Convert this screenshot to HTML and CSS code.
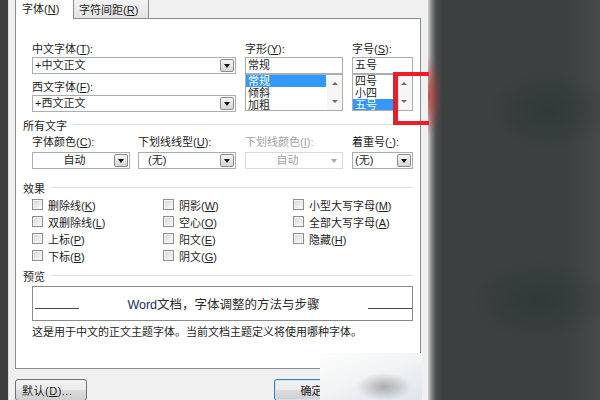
FILE: index.html
```html
<!DOCTYPE html>
<html lang="zh-CN">
<head>
    <meta charset="UTF-8">
    <meta name="viewport" content="width=device-width, initial-scale=1.0">
    <title>字体</title>
    <link rel="stylesheet" href="styles.css">
</head>
<body>
    <div class="screen">
        <div class="edge-left"></div>
        <div class="dialog">
            <div class="tabs">
                <div class="tab active">字体(<u>N</u>)</div>
                <div class="tab">字符间距(<u>R</u>)</div>
            </div>
            <div class="panel">
                <div class="font-grid">
                    <div class="field">
                        <div class="field-label">中文字体(<u>T</u>):</div>
                        <div class="combo"><span class="combo-text">+中文正文</span><span class="drop"></span></div>
                        <div class="field-label spaced">西文字体(<u>F</u>):</div>
                        <div class="combo"><span class="combo-text">+西文正文</span><span class="drop"></span></div>
                    </div>
                    <div class="field">
                        <div class="field-label">字形(<u>Y</u>):</div>
                        <div class="textbox">常规</div>
                        <div class="listbox">
                            <div class="items">
                                <div class="item selected">常规</div>
                                <div class="item">倾斜</div>
                                <div class="item">加粗</div>
                            </div>
                            <div class="scrollbar"><span class="arrow up"></span><span class="arrow down"></span></div>
                        </div>
                    </div>
                    <div class="field">
                        <div class="field-label">字号(<u>S</u>):</div>
                        <div class="textbox">五号</div>
                        <div class="listbox">
                            <div class="items">
                                <div class="item">四号</div>
                                <div class="item">小四</div>
                                <div class="item selected">五号</div>
                            </div>
                            <div class="scrollbar wide"><span class="arrow up"></span><span class="arrow down"></span></div>
                        </div>
                    </div>
                </div>

                <div class="group-title">所有文字</div>
                <div class="color-row">
                    <div class="field">
                        <div class="field-label">字体颜色(<u>C</u>):</div>
                        <div class="combo small"><span class="combo-text center">自动</span><span class="drop"></span></div>
                    </div>
                    <div class="field">
                        <div class="field-label">下划线线型(<u>U</u>):</div>
                        <div class="combo small"><span class="combo-text indent">(无)</span><span class="drop"></span></div>
                    </div>
                    <div class="field disabled">
                        <div class="field-label">下划线颜色(<u>I</u>):</div>
                        <div class="combo small"><span class="combo-text center">自动</span><span class="drop"></span></div>
                    </div>
                    <div class="field">
                        <div class="field-label">着重号(<u>·</u>):</div>
                        <div class="combo tiny"><span class="combo-text">(无)</span><span class="drop"></span></div>
                    </div>
                </div>

                <div class="group-title">效果</div>
                <div class="effects">
                    <label class="check"><span class="box"></span><span>删除线(<u>K</u>)</span></label>
                    <label class="check"><span class="box"></span><span>双删除线(<u>L</u>)</span></label>
                    <label class="check"><span class="box"></span><span>上标(<u>P</u>)</span></label>
                    <label class="check"><span class="box"></span><span>下标(<u>B</u>)</span></label>
                    <label class="check"><span class="box"></span><span>阴影(<u>W</u>)</span></label>
                    <label class="check"><span class="box"></span><span>空心(<u>O</u>)</span></label>
                    <label class="check"><span class="box"></span><span>阳文(<u>E</u>)</span></label>
                    <label class="check"><span class="box"></span><span>阴文(<u>G</u>)</span></label>
                    <label class="check"><span class="box"></span><span>小型大写字母(<u>M</u>)</span></label>
                    <label class="check"><span class="box"></span><span>全部大写字母(<u>A</u>)</span></label>
                    <label class="check"><span class="box"></span><span>隐藏(<u>H</u>)</span></label>
                </div>

                <div class="group-title">预览</div>
                <div class="preview">
                    <span class="baseline"></span>
                    <span class="preview-text"><span class="latin">Word</span>文档，字体调整的方法与步骤</span>
                    <span class="baseline"></span>
                </div>
                <p class="hint">这是用于中文的正文主题字体。当前文档主题定义将使用哪种字体。</p>
            </div>
            <div class="buttons">
                <button type="button" class="btn default">默认(<u>D</u>)...</button>
                <button type="button" class="btn ok">确定</button>
                <button type="button" class="btn">取消</button>
            </div>
        </div>
        <div class="backdrop"></div>
    </div>

    <div class="annotation"></div>
    <div class="watermark"></div>
</body>
</html>
```

FILE: styles.css
```css
* {
    box-sizing: border-box;
}
body {
    margin: 0;
    width: 600px;
    height: 400px;
    overflow: hidden;
    position: relative;
    font-family: "Liberation Sans", "Noto Sans CJK SC", sans-serif;
    font-size: 11px;
    color: #1e1e1e;
    background-color: #3b4141;
}
u {
    text-decoration: underline;
    text-underline-offset: 1px;
}
.screen {
    display: flex;
    height: 400px;
}
.edge-left {
    width: 8px;
    background-color: #3d3d3d;
}
.dialog {
    width: 420px;
    padding: 0 7px;
    background-color: #f0f0f0;
    box-shadow: inset 1px 0 #dadada;
}

/* tabs */
.tabs {
    display: flex;
    height: 18px;
}
.tab {
    width: 76px;
    height: 18px;
    line-height: 20px;
    padding-left: 5px;
    border-left: 1px solid #898c95;
    border-right: 1px solid #898c95;
    background: linear-gradient(#f2f2f2, #e3e3e3);
}
.tab.active {
    width: 58px;
    height: 19px;
    line-height: 18px;
    padding-left: 6px;
    margin-bottom: -1px;
    border-right: none;
    background: #fff;
    position: relative;
    z-index: 1;
}

/* panel */
.panel {
    height: 351px;
    padding: 23px 7px 0;
    border: 1px solid #898c95;
    background-color: #fff;
}
.field-label {
    height: 15px;
    line-height: 15px;
    white-space: nowrap;
}
.field-label.spaced {
    margin-top: 6px;
}
.font-grid {
    display: grid;
    grid-template-columns: 204px 98px 61px;
    column-gap: 9px;
    margin-left: 9px;
}
.combo {
    display: flex;
    align-items: center;
    height: 17px;
    border: 1px solid #a9adb4;
    background-color: #fff;
}
.combo-text {
    flex: 1;
    padding-left: 2px;
    line-height: 15px;
    white-space: nowrap;
}
.combo-text.center {
    text-align: center;
}
.combo-text.indent {
    padding-left: 9px;
}
.combo.small {
    width: 98px;
    margin-top: 2px;
}
.combo.tiny {
    width: 61px;
    margin-top: 2px;
}
.drop {
    display: flex;
    align-items: center;
    justify-content: center;
    width: 14px;
    height: 13px;
    margin-right: 1px;
    border: 1px solid #8b8b8b;
    border-radius: 2px;
    background: linear-gradient(#f6f6f6, #d6d6d6);
}
.drop::after {
    content: "";
    border-left: 3px solid transparent;
    border-right: 3px solid transparent;
    border-top: 4px solid #111;
}
.textbox {
    height: 17px;
    line-height: 15px;
    padding-left: 2px;
    border: 1px solid #a9adb4;
}
.listbox {
    display: flex;
    height: 37px;
    border: 1px solid #a9adb4;
    overflow: hidden;
}
.items {
    flex: 1;
    overflow: hidden;
}
.item {
    height: 12px;
    line-height: 12px;
    padding-left: 2px;
    white-space: nowrap;
}
.item.selected {
    background-color: #3399ff;
    color: #fff;
}
.scrollbar {
    display: flex;
    flex-direction: column;
    width: 15px;
    margin-left: 1px;
    background-color: #f6f6f6;
}
.scrollbar.wide {
    width: 17px;
}
.arrow {
    flex: 1;
    display: flex;
    align-items: center;
    justify-content: center;
}
.arrow::after {
    content: "";
    border-left: 3px solid transparent;
    border-right: 3px solid transparent;
}
.arrow.up::after {
    border-bottom: 3px solid #6a6a6a;
}
.arrow.down::after {
    border-top: 3px solid #6a6a6a;
}

/* group titles */
.group-title {
    display: flex;
    align-items: center;
    height: 15px;
    margin-top: 5px;
    white-space: nowrap;
}
.group-title::after {
    content: "";
    flex: 1;
    height: 1px;
    margin-left: 6px;
    background-color: #d8e1e8;
}
.color-row {
    display: grid;
    grid-template-columns: 106px 107px 107px 61px;
    margin: 3px 0 11px 9px;
}
.disabled {
    color: #a2a2a2;
}
.disabled .combo {
    border-color: #d9d9d9;
}
.disabled .drop {
    border-color: transparent;
    background: none;
}
.disabled .drop::after {
    border-top-color: #a8a8a8;
}
.color-row + .group-title {
    margin-top: 0;
}

/* effects */
.effects {
    display: grid;
    grid-template-columns: 131px 130px auto;
    grid-template-rows: repeat(4, 17px);
    grid-auto-flow: column;
    margin: 1px 0 0 9px;
}
.check {
    display: flex;
    align-items: center;
    gap: 5px;
    white-space: nowrap;
}
.box {
    width: 11px;
    height: 11px;
    border: 1px solid #8e8f8f;
    box-shadow: inset 0 0 0 1px #f4f4f4;
    background: linear-gradient(135deg, #d6d6d6, #fafafa);
}
.effects + .group-title {
    margin-top: 4px;
}

/* preview */
.preview {
    display: flex;
    align-items: center;
    justify-content: space-between;
    height: 35px;
    margin: 3px 0 0 9px;
    padding-left: 2px;
    border: 1px solid #8a8a8a;
}
.baseline {
    width: 44px;
    height: 1px;
    margin-top: 9px;
    background-color: #4a4a4a;
}
.preview-text {
    font-size: 12.5px;
    color: #2a2a2a;
}
.preview-text .latin {
    color: #1c2f5c;
}
.hint {
    height: 15px;
    line-height: 15px;
    margin: 4px 0 0 9px;
    white-space: nowrap;
}

/* buttons */
.buttons {
    display: flex;
    gap: 6px;
    margin-top: 10px;
}
.btn {
    height: 22px;
    width: 66px;
    padding: 0;
    font-family: inherit;
    font-size: 11px;
    color: #1e1e1e;
    border: 1px solid #707070;
    border-radius: 3px;
    background: linear-gradient(#f2f2f2 0%, #ebebeb 50%, #dddddd 51%, #cfcfcf 100%);
}
.btn.default {
    width: 72px;
    text-align: left;
    padding-left: 6px;
    letter-spacing: 0.5px;
}
.btn.ok {
    width: 75px;
    margin-left: auto;
    border-color: #3c7fb1;
    box-shadow: inset 0 0 0 1px #c7e6f8;
}

/* dark surroundings */
.backdrop {
    flex: 1;
    background:
        radial-gradient(14px 42px at 0 96px, rgba(200, 40, 45, 0.75), rgba(200, 40, 45, 0)),
        linear-gradient(to right, #cfcfcf 0, #7d8282 4px, #4a5050 8px, rgba(59, 65, 65, 0) 14px),
        radial-gradient(60px 40px at 120px 110px, #313838, rgba(49, 56, 56, 0)),
        radial-gradient(70px 40px at 110px 300px, #313838, rgba(49, 56, 56, 0)),
        linear-gradient(to right, #3b4141 80%, #464949);
}

/* overlays */
.annotation {
    position: absolute;
    left: 393px;
    top: 72px;
    width: 36px;
    height: 53px;
    border: 4px solid #ee1c25;
    border-left-width: 5px;
    border-right: none;
}
.watermark {
    position: absolute;
    left: 320px;
    top: 353px;
    width: 102px;
    height: 47px;
    background:
        radial-gradient(28px 14px at 64px 34px, rgba(160, 160, 160, 0.85), rgba(160, 160, 160, 0)),
        linear-gradient(160deg, #fdfdfd 0%, #f3f4f5 45%, #dde5ec 100%);
}
```
